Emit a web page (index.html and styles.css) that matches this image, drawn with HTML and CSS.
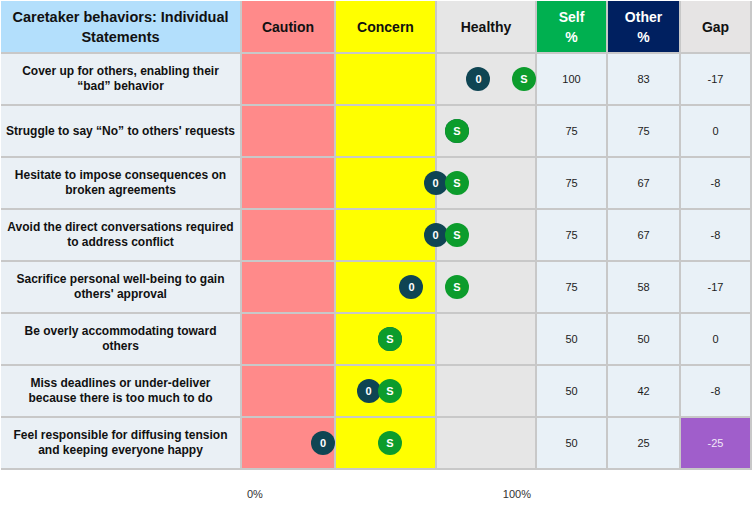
FILE: index.html
```html
<!DOCTYPE html>
<html>
<head>
<meta charset="utf-8">
<link rel="stylesheet" href="styles.css">
</head>
<body>
<div class="page">
  <div class="table">
    <div class="cell head h-title">Caretaker behaviors: Individual<br>Statements</div>
    <div class="chart">
      <div class="band caution head">Caution</div>
      <div class="band concern head">Concern</div>
      <div class="band healthy head">Healthy</div>
    </div>
    <div class="cell head h-self">Self<br>%</div>
    <div class="cell head h-other">Other<br>%</div>
    <div class="cell head h-gap">Gap</div>

    <div class="cell label">Cover up for others, enabling their<br>“bad” behavior</div>
    <div class="chart"><div class="band caution"></div><div class="band concern"></div><div class="band healthy"></div><span class="mk o" style="--v:83">0</span><span class="mk s" style="--v:100">S</span></div>
    <div class="cell num">100</div><div class="cell num">83</div><div class="cell num">-17</div>

    <div class="cell label">Struggle to say “No” to others' requests</div>
    <div class="chart"><div class="band caution"></div><div class="band concern"></div><div class="band healthy"></div><span class="mk o" style="--v:75">0</span><span class="mk s" style="--v:75">S</span></div>
    <div class="cell num">75</div><div class="cell num">75</div><div class="cell num">0</div>

    <div class="cell label">Hesitate to impose consequences on<br>broken agreements</div>
    <div class="chart"><div class="band caution"></div><div class="band concern"></div><div class="band healthy"></div><span class="mk o" style="--v:67">0</span><span class="mk s" style="--v:75">S</span></div>
    <div class="cell num">75</div><div class="cell num">67</div><div class="cell num">-8</div>

    <div class="cell label">Avoid the direct conversations required<br>to address conflict</div>
    <div class="chart"><div class="band caution"></div><div class="band concern"></div><div class="band healthy"></div><span class="mk o" style="--v:67">0</span><span class="mk s" style="--v:75">S</span></div>
    <div class="cell num">75</div><div class="cell num">67</div><div class="cell num">-8</div>

    <div class="cell label">Sacrifice personal well-being to gain<br>others' approval</div>
    <div class="chart"><div class="band caution"></div><div class="band concern"></div><div class="band healthy"></div><span class="mk o" style="--v:58">0</span><span class="mk s" style="--v:75">S</span></div>
    <div class="cell num">75</div><div class="cell num">58</div><div class="cell num">-17</div>

    <div class="cell label">Be overly accommodating toward<br>others</div>
    <div class="chart"><div class="band caution"></div><div class="band concern"></div><div class="band healthy"></div><span class="mk o" style="--v:50">0</span><span class="mk s" style="--v:50">S</span></div>
    <div class="cell num">50</div><div class="cell num">50</div><div class="cell num">0</div>

    <div class="cell label">Miss deadlines or under-deliver<br>because there is too much to do</div>
    <div class="chart"><div class="band caution"></div><div class="band concern"></div><div class="band healthy"></div><span class="mk o" style="--v:42">0</span><span class="mk s" style="--v:50">S</span></div>
    <div class="cell num">50</div><div class="cell num">42</div><div class="cell num">-8</div>

    <div class="cell label">Feel responsible for diffusing tension<br>and keeping everyone happy</div>
    <div class="chart"><div class="band caution"></div><div class="band concern"></div><div class="band healthy"></div><span class="mk o" style="--v:25">0</span><span class="mk s" style="--v:50">S</span></div>
    <div class="cell num">50</div><div class="cell num">25</div><div class="cell num gap-alert">-25</div>
  </div>
  <div class="axis">
    <div class="axis-labels"><span>0%</span><span>100%</span></div>
  </div>
</div>
</body>
</html>
```

FILE: styles.css
```css
html, body {
  margin: 0;
  padding: 0;
  background: #ffffff;
}

body {
  font-family: "Liberation Sans", Arial, sans-serif;
  color: #111111;
}

.page {
  padding: 1px 0 0 1px;
}

.table {
  display: grid;
  grid-template-columns: 239px 293px 69px 71px 69px;
  grid-template-rows: 51px repeat(8, 50px);
  gap: 2px;
  width: max-content;
  background: #c8c8c8;
  border-right: 2px solid #c8c8c8;
  border-bottom: 2px solid #c8c8c8;
}

.cell {
  display: flex;
  align-items: center;
  justify-content: center;
  text-align: center;
  white-space: nowrap;
}

.head {
  display: flex;
  align-items: center;
  justify-content: center;
  text-align: center;
  font-weight: bold;
  font-size: 14px;
  line-height: 20px;
  color: #111111;
}

.h-title { background: #b3dffc; font-size: 14.5px; }
.h-self { background: #00b050; color: #ffffff; }
.h-other { background: #002060; color: #ffffff; }
.h-gap { background: #e6e4e4; }

.label {
  background: #eaf0f5;
  font-weight: bold;
  font-size: 12px;
  line-height: 15px;
}

.num {
  background: #e9f1f7;
  font-size: 11px;
  color: #1c1c1c;
}

.gap-alert {
  background: #a05ecb;
  color: #f1e8f8;
}

.chart {
  position: relative;
  display: grid;
  grid-template-columns: 92px 99px 98px;
  gap: 2px;
  background: #c8c8c8;
}

.band.caution { background: #ff8a8a; }
.band.concern { background: #ffff00; }
.band.healthy { background: #e6e6e6; }

.mk {
  position: absolute;
  top: 13px;
  left: calc(2px + var(--v) * 2.68px);
  width: 24px;
  height: 24px;
  border-radius: 50%;
  display: flex;
  align-items: center;
  justify-content: center;
  font-size: 11px;
  font-weight: bold;
  color: #ffffff;
}

.mk.o { background: #0f4553; }
.mk.s { background: #0c9c2c; }

.axis {
  display: grid;
  grid-template-columns: 239px 293px;
  gap: 2px;
  margin-top: 18px;
}

.axis-labels {
  grid-column: 2;
  display: flex;
  justify-content: space-between;
  padding: 0 4px 0 5px;
  font-size: 11px;
  line-height: 13px;
  color: #333333;
}
```
